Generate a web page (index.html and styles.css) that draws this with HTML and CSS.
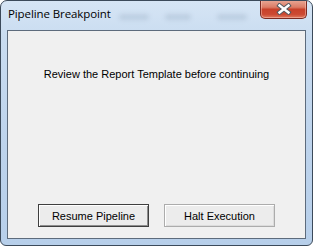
FILE: index.html
```html
<!DOCTYPE html>
<html>
<head>
<meta charset="utf-8">
<link rel="stylesheet" href="styles.css">
</head>
<body>
<div class="window">
  <div class="titlebar">
    <div class="title">Pipeline Breakpoint</div>
    <div class="blur">
      <span class="blob b1"></span><span class="blob b2"></span><span class="blob b3"></span>
    </div>
    <div class="close">
      <svg width="16" height="12" viewBox="0 0 16 12">
        <path d="M3.5 2.5 L12.5 9.5 M12.5 2.5 L3.5 9.5" stroke="#555a60" stroke-width="4.4" stroke-linecap="square"/>
        <path d="M3.5 2.5 L12.5 9.5 M12.5 2.5 L3.5 9.5" stroke="#ffffff" stroke-width="2.4" stroke-linecap="square"/>
      </svg>
    </div>
  </div>
  <div class="client">
    <p class="message">Review the Report Template before continuing</p>
    <div class="buttons">
      <button class="btn default">Resume Pipeline</button>
      <button class="btn">Halt Execution</button>
    </div>
  </div>
</div>
</body>
</html>
```
FILE: styles.css
```css
html, body {
  margin: 0;
  padding: 0;
  background: #ffffff;
}
.window {
  box-sizing: border-box;
  width: 313px;
  height: 246px;
  border: 1px solid #3c4a5a;
  border-radius: 7px 7px 6px 6px;
  background: linear-gradient(180deg, #d6e5f5 0%, #c9dcf0 15%, #bdd3ec 60%, #b7cfea 100%);
  padding: 0 6px 6px 6px;
  display: flex;
  flex-direction: column;
  overflow: hidden;
}
.titlebar {
  height: 29px;
  display: flex;
  align-items: flex-start;
  position: relative;
}
.title {
  font-family: "Open Sans", "Noto Sans", sans-serif;
  font-size: 11.5px;
  color: #000;
  padding: 5px 0 0 1px;
  line-height: 16px;
  letter-spacing: -0.1px;
  position: relative;
  z-index: 1;
}
.blur {
  flex: 1;
  display: flex;
  gap: 16px;
  padding: 13px 0 0 8px;
}
.blob {
  height: 6px;
  border-radius: 3px;
  background: rgba(120, 140, 165, 0.22);
  filter: blur(2px);
}
.b1 { width: 30px; }
.b2 { width: 26px; }
.b3 { width: 30px; margin-left: 10px; }
.close {
  width: 45px;
  height: 18px;
  margin-top: -1px;
  margin-right: -1px;
  border: 1px solid #7a2a22;
  border-top: none;
  border-radius: 0 0 5px 5px;
  background: linear-gradient(180deg, #e9a997 0%, #dc7c66 40%, #c8412a 52%, #cc4a33 80%, #e07a5f 100%);
  box-shadow: inset 0 0 0 1px rgba(255, 210, 200, 0.45);
  display: flex;
  align-items: center;
  justify-content: center;
}
.close svg { display: block; }
.client {
  flex: 1;
  border: 1px solid #5d6b7c;
  background: #f0f0f0;
  display: flex;
  flex-direction: column;
  align-items: center;
}
.message {
  margin: 36px 0 0 0;
  font-family: "Liberation Sans", Arial, sans-serif;
  font-size: 11px;
  line-height: 14px;
  color: #000;
}
.buttons {
  margin-top: auto;
  margin-bottom: 11px;
  display: flex;
  gap: 15px;
}
.btn {
  box-sizing: border-box;
  height: 23px;
  width: 111px;
  font-family: "Liberation Sans", Arial, sans-serif;
  font-size: 11px;
  color: #000;
  background: #ececec;
  border: 1px solid #acacac;
  border-radius: 0;
  padding: 0;
  box-shadow: inset 1px 1px 0 #ffffff, inset -1px -1px 0 #dcdcdc;
}
.btn.default {
  border: 1px solid #3f3f3f;
  box-shadow: inset 1px 1px 0 #ffffff, inset -1px -1px 0 #8e8e8e;
}
```
